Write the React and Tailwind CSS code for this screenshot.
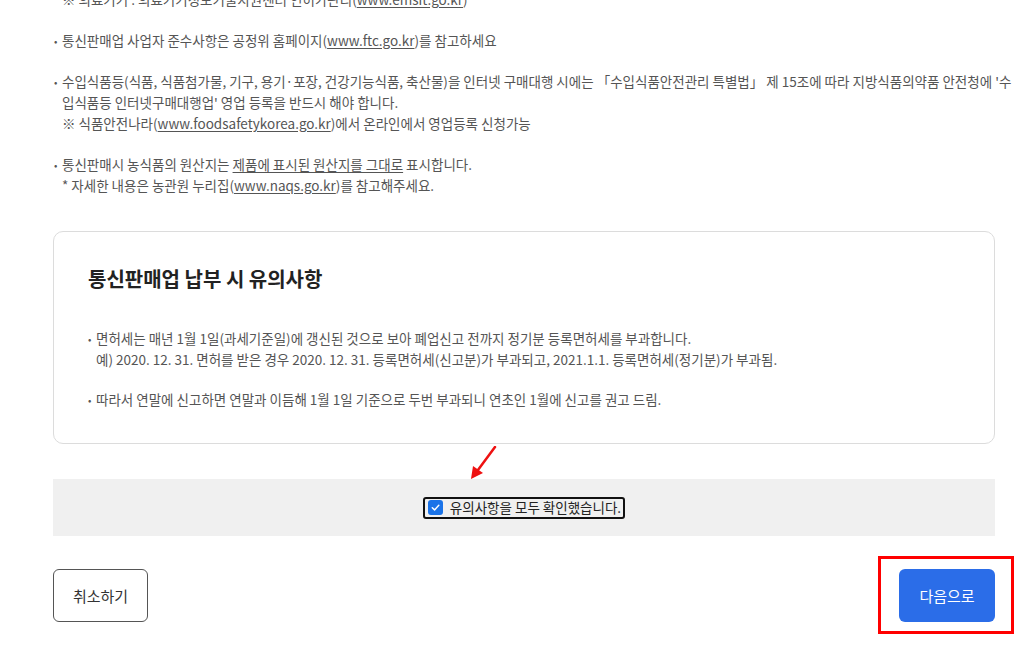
import React from 'react';

const Bullet = ({ children }) => (
    <div className="flex">
        <span className="w-[8px] shrink-0 text-[10px] leading-[21px]">•</span>
        <div>{children}</div>
    </div>
);

const Link = ({ children }) => <span className="underline underline-offset-2">{children}</span>;

const App = () => {
    return (
        <div
            className="relative h-[645px] w-[1024px] overflow-hidden bg-white text-[#555] text-[13.5px] leading-[21px]"
            style={{ fontFamily: '"Noto Sans CJK KR", "Noto Sans", sans-serif' }}
        >
            <div className="-mt-[11px] ml-[54px] w-[962px]">
                {/* Notices */}
                <div className="flex flex-col gap-[20px]">
                    <div className="pl-[8px]">
                        ※ 의료기기 : 의료기기정보기술지원센터 인허가관리(<Link>www.emsit.go.kr</Link>)
                    </div>
                    <Bullet>
                        통신판매업 사업자 준수사항은 공정위 홈페이지(<Link>www.ftc.go.kr</Link>)를 참고하세요
                    </Bullet>
                    <Bullet>
                        <p>
                            수입식품등(식품, 식품첨가물, 기구, 용기·포장, 건강기능식품, 축산물)을 인터넷 구매대행 시에는 「수입식품안전관리 특별법」 제 15조에 따라 지방식품의약품 안전청에 '수<br />입식품등 인터넷구매대행업' 영업 등록을 반드시 해야 합니다.
                        </p>
                        <p>
                            ※ 식품안전나라(<Link>www.foodsafetykorea.go.kr</Link>)에서 온라인에서 영업등록 신청가능
                        </p>
                    </Bullet>
                    <Bullet>
                        <p>
                            통신판매시 농식품의 원산지는 <Link>제품에 표시된 원산지를 그대로</Link> 표시합니다.
                        </p>
                        <p>
                            * 자세한 내용은 농관원 누리집(<Link>www.naqs.go.kr</Link>)를 참고해주세요.
                        </p>
                    </Bullet>
                </div>
            </div>

            <div className="ml-[53px] w-[942px]">
                {/* Caution card */}
                <div className="mt-[35px] rounded-[10px] border border-[#dcdcdc] px-[34px] pt-[33px] pb-[33px]">
                    <h2 className="text-[20px] font-bold leading-[28px] text-[#222]">
                        통신판매업 납부 시 유의사항
                    </h2>
                    <div className="mt-[35px] flex flex-col gap-[19px]">
                        <Bullet>
                            <p>면허세는 매년 1월 1일(과세기준일)에 갱신된 것으로 보아 폐업신고 전까지 정기분 등록면허세를 부과합니다.</p>
                            <p>예) 2020. 12. 31. 면허를 받은 경우 2020. 12. 31. 등록면허세(신고분)가 부과되고, 2021.1.1. 등록면허세(정기분)가 부과됨.</p>
                        </Bullet>
                        <Bullet>
                            따라서 연말에 신고하면 연말과 이듬해 1월 1일 기준으로 두번 부과되니 연초인 1월에 신고를 권고 드림.
                        </Bullet>
                    </div>
                </div>

                {/* Agreement panel */}
                <div className="relative mt-[35px] flex h-[57px] items-center justify-center bg-[#f0f0f0]">
                    <svg
                        className="absolute left-[416px] -top-[33px]"
                        width="28"
                        height="34"
                        viewBox="0 0 28 34"
                    >
                        <line x1="26" y1="1" x2="6" y2="28" stroke="#ee1111" strokeWidth="2.5" strokeLinecap="round" />
                        <polygon points="2,33 4,20 14,27" fill="#ee1111" />
                    </svg>
                    <label className="flex h-[22px] items-center gap-[7px] rounded-[3px] border-2 border-[#111] pl-[3px] pr-[2px] text-[13.5px] text-[#222]">
                        <span className="flex h-[15px] w-[15px] items-center justify-center rounded-[3px] bg-[#1a73e8]">
                            <svg width="11" height="11" viewBox="0 0 12 12">
                                <path d="M2.5 6.2 L5 8.6 L9.6 3.6" fill="none" stroke="white" strokeWidth="1.6" strokeLinecap="round" strokeLinejoin="round" />
                            </svg>
                        </span>
                        유의사항을 모두 확인했습니다.
                    </label>
                </div>

                {/* Buttons */}
                <div className="mt-[33px] flex items-center justify-between">
                    <button className="h-[53px] w-[95px] rounded-[6px] border border-[#555] bg-white text-[15px] text-[#333]">
                        취소하기
                    </button>
                    <div className="relative">
                        <button className="h-[53px] w-[96px] rounded-[6px] bg-[#2b6de8] text-[15px] text-white">
                            다음으로
                        </button>
                        <div className="absolute -left-[21px] -right-[19px] -top-[13px] -bottom-[12px] border-[3px] border-[#ff0000]" />
                    </div>
                </div>
            </div>
        </div>
    );
};

export default App;
